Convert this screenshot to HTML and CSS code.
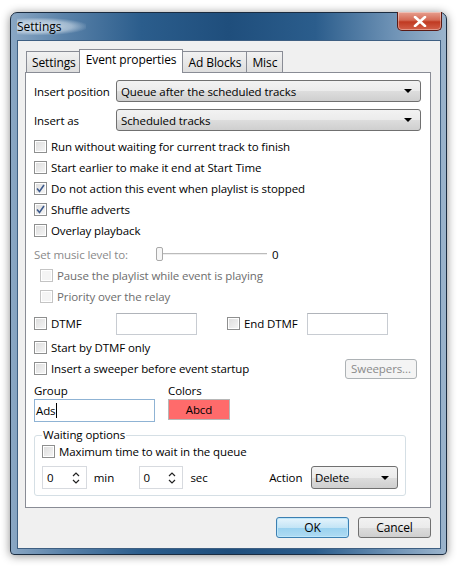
FILE: index.html
```html
<!DOCTYPE html>
<html>
<head>
<meta charset="utf-8">
<link rel="stylesheet" href="styles.css">
</head>
<body>
<div class="window">
  <div class="titlebar">
    <span class="title">Settings</span>
    <div class="close"><svg width="14" height="11" viewBox="0 0 14 11"><path d="M2 1 L12 10 M12 1 L2 10" stroke="#fff" stroke-width="2.6" stroke-linecap="round"/></svg></div>
  </div>
  <div class="client">
    <div class="tabs">
      <div class="tab">Settings</div>
      <div class="tab active">Event properties</div>
      <div class="tab">Ad Blocks</div>
      <div class="tab">Misc</div>
    </div>
    <div class="panel">
      <div class="row combo-row">
        <span class="lbl">Insert position</span>
        <div class="combo"><span>Queue after the scheduled tracks</span><i class="tri"></i></div>
      </div>
      <div class="row combo-row second">
        <span class="lbl">Insert as</span>
        <div class="combo"><span>Scheduled tracks</span><i class="tri"></i></div>
      </div>
      <div class="checks">
        <label class="cb"><span class="box"></span>Run without waiting for current track to finish</label>
        <label class="cb"><span class="box"></span>Start earlier to make it end at Start Time</label>
        <label class="cb"><span class="box checked"><svg width="9" height="9" viewBox="0 0 9 9"><path d="M1 4.5 L3.5 7.5 L8 1" fill="none" stroke="#3d5a8c" stroke-width="1.6"/></svg></span>Do not action this event when playlist is stopped</label>
        <label class="cb"><span class="box checked"><svg width="9" height="9" viewBox="0 0 9 9"><path d="M1 4.5 L3.5 7.5 L8 1" fill="none" stroke="#3d5a8c" stroke-width="1.6"/></svg></span>Shuffle adverts</label>
        <label class="cb"><span class="box"></span>Overlay playback</label>
        <div class="cb music">
          <span class="dim">Set music level to:</span>
          <div class="slider"><span class="thumb"></span><span class="track"></span></div>
          <span class="val">0</span>
        </div>
        <label class="cb indent disabled"><span class="box"></span>Pause the playlist while event is playing</label>
        <label class="cb indent disabled"><span class="box"></span>Priority over the relay</label>
      </div>
      <div class="dtmf-row">
        <label class="cb dt1"><span class="box"></span>DTMF</label>
        <span class="field"></span>
        <label class="cb dt2"><span class="box"></span>End DTMF</label>
        <span class="field"></span>
      </div>
      <label class="cb sdtmf"><span class="box"></span>Start by DTMF only</label>
      <div class="sweep-row">
        <label class="cb"><span class="box"></span>Insert a sweeper before event startup</label>
        <span class="btn small disabled-btn">Sweepers...</span>
      </div>
      <div class="gc-row">
        <div class="gcol">
          <span class="gl">Group</span>
          <span class="field group">Ads<i class="caret"></i></span>
        </div>
        <div class="gcol">
          <span class="gl">Colors</span>
          <span class="color">Abcd</span>
        </div>
      </div>
      <fieldset class="waiting">
        <legend>Waiting options</legend>
        <label class="cb"><span class="box"></span>Maximum time to wait in the queue</label>
        <div class="wrow">
          <span class="spin">0<svg width="8" height="12" viewBox="0 0 8 12"><path d="M1 4 L4 1 L7 4 M1 8 L4 11 L7 8" fill="none" stroke="#222" stroke-width="1.2"/></svg></span>
          <span class="unit">min</span>
          <span class="spin">0<svg width="8" height="12" viewBox="0 0 8 12"><path d="M1 4 L4 1 L7 4 M1 8 L4 11 L7 8" fill="none" stroke="#222" stroke-width="1.2"/></svg></span>
          <span class="unit">sec</span>
          <span class="act">Action</span>
          <div class="combo small-combo"><span>Delete</span><i class="tri"></i></div>
        </div>
      </fieldset>
    </div>
    <div class="buttons">
      <span class="btn ok">OK</span>
      <span class="btn">Cancel</span>
    </div>
  </div>
</div>
<svg class="arrow" width="461" height="571" viewBox="0 0 461 571">
  <path d="M349 254 L318 216" stroke="#ee1111" stroke-width="3.2" stroke-linecap="round"/>
  <path d="M306 203 L333 217 L311 231 Z" fill="#ee1111"/>
</svg>
</body>
</html>
```
FILE: styles.css
```css
html, body { margin: 0; padding: 0; }
body {
  width: 461px; height: 571px; background: #fff; overflow: hidden;
  font-family: "Open Sans", "Noto Sans", sans-serif; font-size: 11.5px; letter-spacing: -0.1px; color: #000;
  position: relative;
}
.window {
  margin: 12px 0 0 10px; width: 437px; height: 543px; box-sizing: border-box;
  border-radius: 7px 7px 4px 4px;
  background: linear-gradient(90deg, #8aa7c4 0%, #5a82a9 12%, #2b5d8c 30%, #1f4e7c 50%, #2b5d8c 70%, #6f93b6 88%, #9bb4cc 100%);
  border: 1px solid #1b2c40;
  box-shadow: 0 1px 10px rgba(0,0,0,.45);
  padding: 0 5px 5px 6px;
  display: flex; flex-direction: column;
}
.titlebar { height: 27px; position: relative; display: flex; align-items: center; }
.title {
  font-size: 12px; letter-spacing: 0; margin-left: 0; margin-top: 0; padding: 0 24px 0 0;
  background: radial-gradient(ellipse at 30% 50%, rgba(230,238,245,.85) 0%, rgba(230,238,245,.5) 50%, rgba(230,238,245,0) 75%);
}
.close {
  position: absolute; right: -1px; top: -1px; width: 45px; height: 19px; box-sizing: border-box;
  border: 1px solid #5a1a14; border-top: none; border-radius: 0 0 5px 5px;
  background: linear-gradient(#e8a090 0%, #d46a55 45%, #c03a22 55%, #d2604a 100%);
  display: flex; align-items: center; justify-content: center;
  box-shadow: inset 0 0 0 1px rgba(255,255,255,.35);
}
.client {
  flex: 1; background: #f0f0f0; border: 1px solid #3e5f82;
  display: flex; flex-direction: column; padding: 7px 9px 0 7px;
}
.tabs { display: flex; align-items: flex-end; height: 24px; padding-left: 1px; position: relative; z-index: 2; }
.tab {
  height: 21px; box-sizing: border-box; padding: 0 5px; border: 1px solid #898c95; border-bottom: none;
  background: linear-gradient(#f2f2f2, #dedede); line-height: 21px; margin-right: -1px; font-size: 12px;
}
.tab.active {
  height: 24px; background: #fff; border-color: #898c95; padding: 0 6px; line-height: 20px; margin: 0 -1px 0 -2px;
  position: relative; top: 1px; z-index: 3;
}
.panel {
  height: 436px; box-sizing: border-box; border: 1px solid #898c95; background: #fff;
  padding: 7px 9px 0 8px; display: flex; flex-direction: column; position: relative; z-index: 1;
}
.row { display: flex; align-items: center; height: 22px; }
.combo-row.second { margin-top: 7px; }
.lbl { width: 82px; }
.combo {
  flex: 1; height: 22px; box-sizing: border-box; border: 1px solid #707070; border-radius: 3px;
  background: linear-gradient(#f2f2f2 0%, #ebebeb 50%, #dddddd 51%, #cfcfcf 100%);
  display: flex; align-items: center; justify-content: space-between; padding: 0 8px 0 4px;
}
.tri { width: 0; height: 0; border-left: 4px solid transparent; border-right: 4px solid transparent; border-top: 4px solid #000; }
.checks { margin-top: 5px; display: flex; flex-direction: column; }
.cb { display: flex; align-items: center; height: 21px; white-space: nowrap; }
.box {
  width: 13px; height: 13px; box-sizing: border-box; border: 1px solid #8e8f8f; margin-right: 4px;
  background: linear-gradient(135deg, #dcdcdc, #f6f6f6); box-shadow: inset 0 0 0 1px #fff;
  display: inline-flex; align-items: center; justify-content: center; flex: none;
}
.cb.indent { padding-left: 6px; }
.disabled { color: #6d6d6d; }
.disabled .box { border-color: #c4c4c4; background: #f4f4f4; }
.music { height: 22px; margin-top: 2px; }
.dim { color: #8a8a8a; width: 122px; }
.slider { display: flex; align-items: center; width: 111px; }
.thumb { width: 5px; height: 12px; border: 1px solid #a9a9a9; border-radius: 2px; background: #f6f6f6; flex: none; }
.track { flex: 1; height: 1px; background: #bbb; border-bottom: 1px solid #eee; }
.val { margin-left: 5px; }
.dtmf-row { display: flex; align-items: center; height: 23px; margin-top: 5px; }
.dt1 { width: 82px; }
.dt2 { width: 80px; margin-left: 30px; }
.field {
  width: 81px; height: 22px; box-sizing: border-box; border: 1px solid #c8ccd2; border-top-color: #b0b4ba; background: #fff;
  display: inline-flex; align-items: center;
}
.sdtmf { margin-top: 2px; }
.sweep-row { display: flex; align-items: center; justify-content: space-between; height: 21px; }
.btn {
  display: inline-flex; align-items: center; justify-content: center; box-sizing: border-box; font-size: 12px;
  width: 73px; height: 21px; border: 1px solid #707070; border-radius: 3px;
  background: linear-gradient(#f2f2f2 0%, #ebebeb 50%, #dddddd 51%, #cfcfcf 100%);
}
.btn.small { width: 72px; height: 20px; margin-right: 4px; font-size: 11.5px; }
.disabled-btn { color: #8a8a8a; border-color: #adb2b5; background: #f4f4f4; }
.gc-row { display: flex; margin-top: 3px; gap: 13px; }
.gcol { display: flex; flex-direction: column; }
.gl { height: 17px; line-height: 17px; }
.field.group { width: 121px; height: 23px; border-color: #8fb3d4; padding-left: 1px; }
.caret { display: inline-block; width: 1px; height: 15px; background: #000; margin-left: 0; }
.color {
  width: 62px; height: 21px; box-sizing: border-box; background: #ff6b6b; border: 1px solid #b7b7b7;
  display: flex; align-items: center; justify-content: center;
}
.waiting {
  margin: 6px 15px 0 0; padding: 0 7px 6px 7px; border: 1px solid #d5dfe5; border-radius: 3px; min-width: 0;
}
.waiting legend { padding: 0 1px; margin-left: 0; line-height: 14px; }
.waiting .cb { height: 18px; margin-top: 0; }
.wrow { display: flex; align-items: center; height: 23px; margin-top: 6px; }
.spin {
  width: 45px; height: 23px; box-sizing: border-box; border: 1px solid #d7dadf; background: #fff;
  display: flex; align-items: center; justify-content: space-between; padding: 0 6px 0 4px;
}
.unit { width: 52px; padding-left: 7px; box-sizing: border-box; }
.act { margin-left: 34px; width: 42px; }
.small-combo { flex: none; width: 87px; height: 23px; padding-left: 3px; }
.buttons { display: flex; justify-content: flex-end; gap: 9px; margin-top: 9px; padding-right: 0; }
.btn.ok {
  border-color: #3c7fb1;
  background: linear-gradient(#e5f4fc 0%, #c4e5f6 50%, #98d1ef 51%, #b0dbf2 100%);
  box-shadow: inset 0 0 0 1px #bde6fa;
}
.arrow { position: absolute; left: 0; top: 0; pointer-events: none; }
```
